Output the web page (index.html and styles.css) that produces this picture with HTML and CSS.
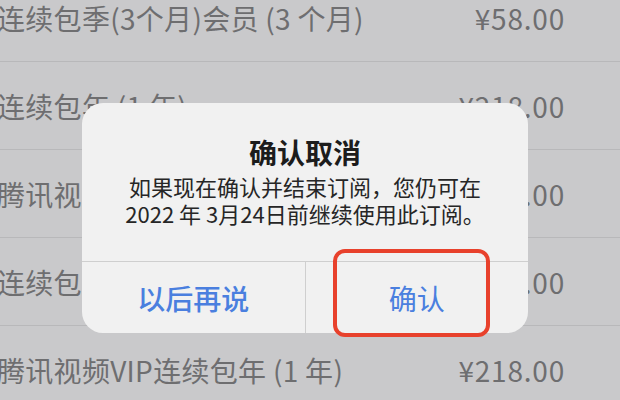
FILE: index.html
```html
<!DOCTYPE html>
<html lang="zh-CN">
<head>
<meta charset="utf-8">
<link rel="stylesheet" href="styles.css">
</head>
<body>
<div class="screen">
  <ul class="list">
    <li class="row"><span class="name">连续包季(3个月)会员 (3 个月)</span><span class="price">¥58.00</span></li>
    <li class="row"><span class="name">连续包年 (1 年)</span><span class="price">¥218.00</span></li>
    <li class="row"><span class="name">腾讯视频VIP连续包月 (1 个月)</span><span class="price">¥25.00</span></li>
    <li class="row"><span class="name">连续包月 (1 个月)</span><span class="price">¥20.00</span></li>
    <li class="row"><span class="name">腾讯视频VIP连续包年 (1 年)</span><span class="price">¥218.00</span></li>
  </ul>
  <div class="alert">
    <div class="alert-body">
      <div class="alert-title">确认取消</div>
      <div class="alert-msg">如果现在确认并结束订阅，您仍可在<br>2022 年 3月24日前继续使用此订阅。</div>
    </div>
    <div class="alert-actions">
      <div class="alert-btn alert-btn-cancel">以后再说</div>
      <div class="alert-btn">确认</div>
    </div>
  </div>
  <div class="highlight"></div>
</div>
</body>
</html>
```

FILE: styles.css
```css
html, body {
  margin: 0;
  padding: 0;
}
body {
  width: 620px;
  height: 400px;
  overflow: hidden;
  background: #c9c9cb;
  font-family: "Noto Sans CJK SC", "Noto Sans", sans-serif;
}
.screen {
  position: relative;
  width: 620px;
  height: 400px;
  overflow: hidden;
}
.list {
  list-style: none;
  margin: -26px 0 0 0;
  padding: 0;
}
.row {
  display: flex;
  align-items: center;
  justify-content: space-between;
  height: 87px;
  border-bottom: 1px solid #b8b8ba;
  padding: 0 55px 0 0;
  margin-left: -3px;
  font-size: 28px;
  letter-spacing: 0.3px;
  color: #6e6e70;
  white-space: nowrap;
}
.price {
  letter-spacing: 0.8px;
}
.alert {
  position: absolute;
  left: 82px;
  top: 103px;
  width: 446px;
  height: 230px;
  background: #f1f1f1;
  border-radius: 21px;
  display: flex;
  flex-direction: column;
  overflow: hidden;
}
.alert-body {
  padding: 32px 20px 0;
  height: 126px;
  text-align: center;
}
.alert-title {
  font-size: 28px;
  line-height: 34px;
  font-weight: 700;
  color: #1c1c1c;
}
.alert-msg {
  margin-top: 4px;
  font-size: 22px;
  line-height: 27px;
  color: #262626;
}
.alert-actions {
  display: flex;
  border-top: 1px solid #cfcfcf;
  height: 71px;
}
.alert-btn {
  flex: 1;
  display: flex;
  align-items: center;
  justify-content: center;
  font-size: 28px;
  color: #4a7fdf;
}
.alert-btn-cancel {
  font-weight: 500;
}
.alert-btn + .alert-btn {
  border-left: 1px solid #cfcfcf;
}
.highlight {
  position: absolute;
  left: 333px;
  top: 249px;
  width: 149px;
  height: 80px;
  border: 4px solid #e8412c;
  border-radius: 12px;
}
```
